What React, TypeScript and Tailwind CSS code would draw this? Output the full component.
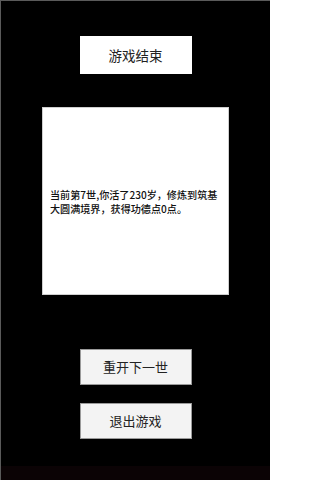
export default function App() {
  const font = { fontFamily: '"Noto Sans CJK SC", "Noto Sans", sans-serif' }

  return (
    <div
      className="w-[270px] h-[480px] bg-black border-t border-l border-[#5a5a5a] flex flex-col items-center overflow-hidden"
      style={font}
    >
      {/* Title */}
      <div className="mt-[35px] w-[112px] h-[38px] bg-white flex items-center justify-center text-[13.5px] text-[#222]">
        游戏结束
      </div>

      {/* Result panel */}
      <div className="mt-[33px] w-[187px] h-[188px] bg-white border border-[#cfcfcf] flex items-center pl-[7px] pt-[2px]">
        <p className="text-[10.1px] leading-[13.6px] text-[#111] font-medium whitespace-nowrap">
          当前第7世,你活了230岁，修炼到筑基
          <br />
          大圆满境界，获得功德点0点。
        </p>
      </div>

      {/* Actions */}
      <div className="mt-[54px] flex flex-col gap-[18px]">
        <button className="w-[112px] h-[36px] bg-[#f3f3f3] border border-[#9a9a9a] text-[13px] text-[#222]">
          重开下一世
        </button>
        <button className="w-[112px] h-[36px] bg-[#f3f3f3] border border-[#9a9a9a] text-[13px] text-[#222]">
          退出游戏
        </button>
      </div>

      <div className="mt-auto w-full h-[14px] bg-[#0b0305]"></div>
    </div>
  )
}
